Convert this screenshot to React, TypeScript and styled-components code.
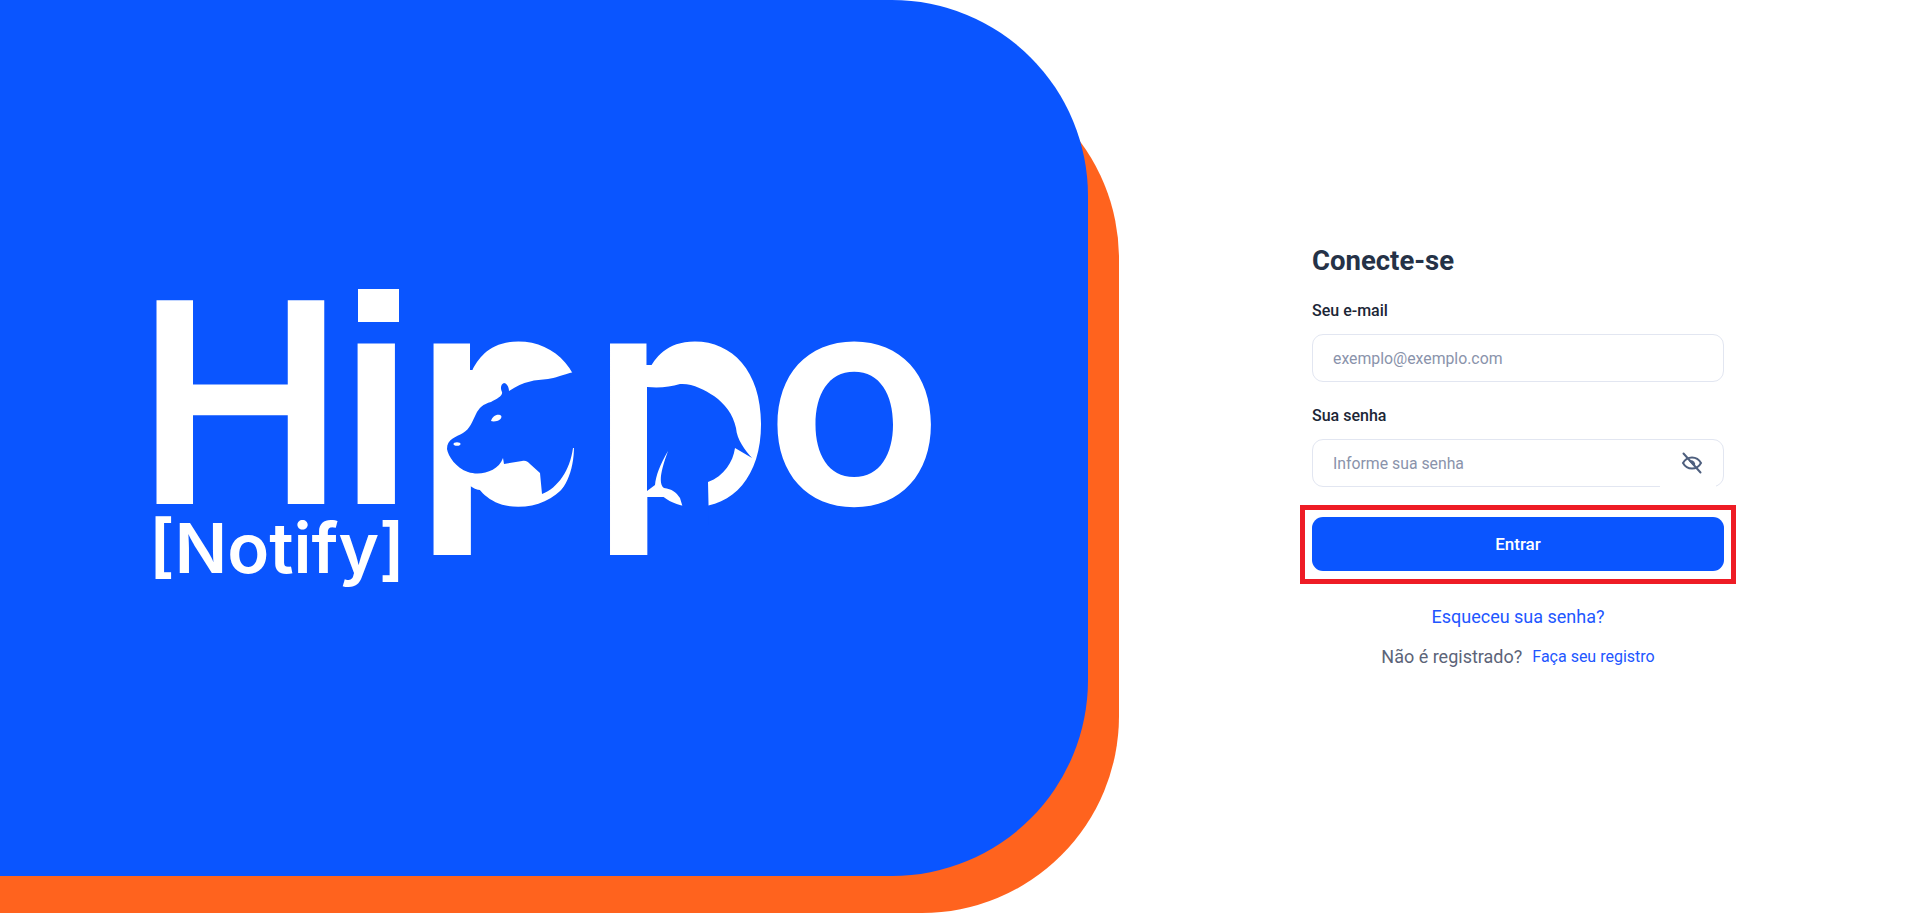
import React from "react";
import styled, { createGlobalStyle } from "styled-components";

const Global = createGlobalStyle`
  html, body { margin: 0; padding: 0; background: #fff; }
  body { font-family: Roboto, "Noto Sans", sans-serif; }
  * { box-sizing: border-box; }
`;

const BLUE = "#0a55ff";

const Page = styled.main`
  display: flex;
  width: 1918px;
  height: 913px;
  overflow: hidden;
`;

const Hero = styled.section`
  position: relative;
  flex: 0 0 1119px;
  height: 913px;
  &::before {
    content: "";
    position: absolute;
    left: 0;
    right: 0;
    top: 62px;
    bottom: 0;
    background: #ff631e;
    border-radius: 0 197px 197px 0;
  }
`;

const BluePanel = styled.div`
  position: relative;
  width: 1088px;
  height: 876px;
  background: ${BLUE};
  border-radius: 0 196px 196px 0;
  display: flex;
  align-items: center;
  justify-content: center;
`;

const Logo = styled.div`
  position: relative;
  width: 780px;
  height: 300px;
  color: #fff;
  font-family: Inter, sans-serif;
`;

const Word = styled.div`
  margin: -32px 0 0 -18px;
  font-size: 280px;
  line-height: 282px;
  font-weight: 600;
  white-space: nowrap;
`;

const Lower = styled.span`
  font-size: 294px;
  margin-left: -7px;
`;

const Glyph = styled.span<{ $ls: number }>`
  letter-spacing: ${(p) => p.$ls}px;
`;

const Tagline = styled.div`
  position: absolute;
  left: -5px;
  top: 220px;
  font-size: 69px;
  line-height: 80px;
  font-weight: 600;
  white-space: nowrap;
`;

const HippoCut = styled.svg`
  position: absolute;
  inset: 0;
  overflow: visible;
`;

const FormColumn = styled.section`
  flex: 1;
  display: flex;
  justify-content: center;
  align-items: flex-start;
  padding: 244px 1px 0 0;
`;

const Form = styled.form`
  width: 412px;
  display: flex;
  flex-direction: column;
`;

const Title = styled.h1`
  margin: 0 0 24px;
  font-size: 27.5px;
  line-height: 34px;
  font-weight: 700;
  color: #253247;
`;

const Label = styled.label`
  display: block;
  font-size: 16px;
  line-height: 18px;
  font-weight: 500;
  color: #1c2636;
  margin-bottom: 14px;
`;

const Field = styled.div<{ $mb: number }>`
  position: relative;
  height: 48px;
  margin-bottom: ${(p) => p.$mb}px;
`;

const Input = styled.input`
  display: block;
  width: 100%;
  height: 100%;
  border: 1px solid #e2e6f1;
  border-radius: 11px;
  padding: 0 20px;
  font: 400 15.8px Roboto, sans-serif;
  color: #253247;
  background: #fff;
  outline: none;
  &::placeholder { color: #8a93ab; opacity: 1; }
`;

const BorderGap = styled.span`
  position: absolute;
  left: 348px;
  bottom: 0;
  width: 56px;
  height: 2px;
  background: #fff;
`;

const EyeButton = styled.button`
  position: absolute;
  right: 20px;
  top: 12px;
  width: 24px;
  height: 24px;
  padding: 0;
  border: 0;
  background: none;
  display: flex;
  align-items: center;
  justify-content: center;
`;

const Highlight = styled.div`
  position: relative;
  margin-bottom: 35px;
  &::after {
    content: "";
    position: absolute;
    left: -12px;
    right: -12px;
    top: -12px;
    bottom: -13px;
    border: 5px solid #ee1c25;
    pointer-events: none;
  }
`;

const Submit = styled.button`
  display: block;
  width: 100%;
  height: 54px;
  border: 0;
  border-radius: 11px;
  background: ${BLUE};
  color: #fff;
  font: 500 17px Roboto, sans-serif;
`;

const Forgot = styled.a`
  align-self: center;
  font-size: 18px;
  line-height: 22px;
  color: #2256ff;
  margin-bottom: 18px;
`;

const RegisterRow = styled.div`
  display: flex;
  justify-content: center;
  align-items: center;
  gap: 10px;
`;

const Muted = styled.span`
  font-size: 18px;
  line-height: 22px;
  color: #5c6478;
`;

const RegisterLink = styled.a`
  font-size: 16px;
  line-height: 22px;
  color: #2256ff;
`;

const EyeOffIcon = () => (
  <svg width="22" height="22" viewBox="0 0 22 22" fill="none" stroke="#4e5f7e" strokeWidth="2" strokeLinecap="round">
    <path d="M2 11c2-3.600 5-5.500 9-5.500s7 1.900 9 5.500c-2 3.600-5 5.500-9 5.500s-7-1.900-9-5.500z" />
    <path d="M8 9a4 4 0 0 1 5.500 5.500z" fill="#4e5f7e" stroke="none" />
    <path d="M2.500 1.500 19.500 20.500" />
  </svg>
);

export default function App() {
  return (
    <Page>
      <Global />
      <Hero>
        <BluePanel>
          <Logo>
            <Word>
              H<Lower><Glyph $ls={-1}>i</Glyph><Glyph $ls={-7}>p</Glyph><Glyph $ls={-9}>p</Glyph><Glyph $ls={0}>o</Glyph></Lower>
            </Word>
            <HippoCut width="780" height="300" viewBox="154 288 780 300">
              <rect x="345" y="265" width="70" height="67" fill={BLUE} />
              <rect x="358" y="289" width="41" height="33" fill="#fff" />
              <g fill="#fff">
                <rect x="465" y="368" width="80" height="122" rx="16" />
                <path d="M700 430 742 430C742 460 728 485 705 497Z" />
                <rect x="645" y="445" width="40" height="52" />
                <rect x="645" y="365" width="90" height="70" />
              </g>
              <g fill={BLUE}>
                <path d="M574 372C562 375 555 378 548 379C535 380 524 381 509 391C509 386 506 383 504 383C501 384 500 388 502 392C503 396 497 399 491 402C483 404 479 408 476 414C472 422 470 429 463 433C456 437 447 439 447 449C448 456 456 468 468 472C480 476 498 472 503 458L504 464 522 461C526 460 528 462 530 464L540 473 542 494C558 488 570 470 573 448L600 448 600 372Z" />
                <rect x="574" y="330" width="30" height="120" />
                <path d="M574 446C574 472 565 492 548 502C540 505 535 507 528 508L528 525 604 525 604 446Z" />
                <path d="M647 387C660 388 670 387 680 384C692 383 705 390 714 396C725 404 733 414 736 428C737 440 745 450 752 458L735 448C733 462 724 476 708 482L709 525 683 525 683 508 680 498C676 492 672 489 664 488C658 484 661 470 668 451C660 465 656 475 655 485L647 491Z" />
                <rect x="425" y="555" width="230" height="20" />
              </g>
              <g fill="#fff">
                <path d="M491 421C492 417 496 414 500 415C503 416 501 420 497 421C495 421.500 492 421.500 491 421Z" />
                <ellipse cx="457" cy="444" rx="3.500" ry="1.800" />
              </g>
            </HippoCut>
            <Tagline>[Notify]</Tagline>
          </Logo>
        </BluePanel>
      </Hero>
      <FormColumn>
        <Form onSubmit={(e) => e.preventDefault()}>
          <Title>Conecte-se</Title>
          <Label htmlFor="email">Seu e-mail</Label>
          <Field $mb={25}>
            <Input id="email" placeholder="exemplo@exemplo.com" />
          </Field>
          <Label htmlFor="senha">Sua senha</Label>
          <Field $mb={30}>
            <Input id="senha" type="password" placeholder="Informe sua senha" />
            <BorderGap />
            <EyeButton type="button" aria-label="Mostrar senha">
              <EyeOffIcon />
            </EyeButton>
          </Field>
          <Highlight>
            <Submit type="submit">Entrar</Submit>
          </Highlight>
          <Forgot>Esqueceu sua senha?</Forgot>
          <RegisterRow>
            <Muted>Não é registrado?</Muted>
            <RegisterLink>Faça seu registro</RegisterLink>
          </RegisterRow>
        </Form>
      </FormColumn>
    </Page>
  );
}
